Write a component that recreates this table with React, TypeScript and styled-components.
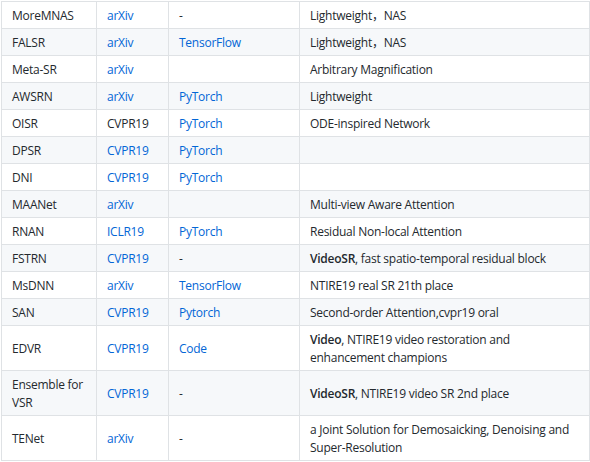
import React from "react";
import styled, { createGlobalStyle } from "styled-components";

const Global = createGlobalStyle`
  html, body { margin: 0; padding: 0; background: #ffffff; }
  body {
    font-family: "Open Sans", "Noto Sans CJK SC", sans-serif;
    font-size: 12px;
    line-height: 18px;
    letter-spacing: -0.25px;
    color: #24292e;
  }
`;

const Page = styled.div`
  padding: 1px 0 0 1px;
`;

const Table = styled.table`
  border-collapse: collapse;
  border-spacing: 0;
  table-layout: fixed;
  width: 588px;
`;

const Row = styled.tr<{ $striped?: boolean }>`
  background: ${(p) => (p.$striped ? "#f6f8fa" : "#ffffff")};
`;

const Cell = styled.td`
  border: 1px solid #dfe2e5;
  padding: 5px 10px 3px 10px;
  vertical-align: middle;
  text-align: left;
`;

const Link = styled.a`
  color: #0366d6;
  text-decoration: none;
`;

const Strong = styled.strong`
  font-weight: 600;
`;

type Cellv = React.ReactNode;
type RowData = { name: Cellv; pub: Cellv; code: Cellv; note: Cellv };

const L = (t: string) => <Link href="#">{t}</Link>;

const rows: RowData[] = [
  { name: "MoreMNAS", pub: L("arXiv"), code: "-", note: "Lightweight，NAS" },
  { name: "FALSR", pub: L("arXiv"), code: L("TensorFlow"), note: "Lightweight，NAS" },
  { name: "Meta-SR", pub: L("arXiv"), code: "", note: "Arbitrary Magnification" },
  { name: "AWSRN", pub: L("arXiv"), code: L("PyTorch"), note: "Lightweight" },
  { name: "OISR", pub: "CVPR19", code: L("PyTorch"), note: "ODE-inspired Network" },
  { name: "DPSR", pub: L("CVPR19"), code: L("PyTorch"), note: "" },
  { name: "DNI", pub: L("CVPR19"), code: L("PyTorch"), note: "" },
  { name: "MAANet", pub: L("arXiv"), code: "", note: "Multi-view Aware Attention" },
  { name: "RNAN", pub: L("ICLR19"), code: L("PyTorch"), note: "Residual Non-local Attention" },
  {
    name: "FSTRN",
    pub: L("CVPR19"),
    code: "-",
    note: (
      <>
        <Strong>VideoSR</Strong>, fast spatio-temporal residual block
      </>
    ),
  },
  { name: "MsDNN", pub: L("arXiv"), code: L("TensorFlow"), note: "NTIRE19 real SR 21th place" },
  { name: "SAN", pub: L("CVPR19"), code: L("Pytorch"), note: "Second-order Attention,cvpr19 oral" },
  {
    name: "EDVR",
    pub: L("CVPR19"),
    code: L("Code"),
    note: (
      <>
        <Strong>Video</Strong>, NTIRE19 video restoration and enhancement champions
      </>
    ),
  },
  {
    name: "Ensemble for VSR",
    pub: L("CVPR19"),
    code: "-",
    note: (
      <>
        <Strong>VideoSR</Strong>, NTIRE19 video SR 2nd place
      </>
    ),
  },
  {
    name: "TENet",
    pub: L("arXiv"),
    code: "-",
    note: "a Joint Solution for Demosaicking, Denoising and Super-Resolution",
  },
];

export default function App() {
  return (
    <Page>
      <Global />
      <Table>
        <colgroup>
          <col style={{ width: 95 }} />
          <col style={{ width: 72 }} />
          <col style={{ width: 131 }} />
          <col style={{ width: 290 }} />
        </colgroup>
        <tbody>
          {rows.map((r, i) => (
            <Row key={i} $striped={i % 2 === 1}>
              <Cell>{r.name}</Cell>
              <Cell>{r.pub}</Cell>
              <Cell>{r.code}</Cell>
              <Cell>{r.note}</Cell>
            </Row>
          ))}
        </tbody>
      </Table>
    </Page>
  );
}
